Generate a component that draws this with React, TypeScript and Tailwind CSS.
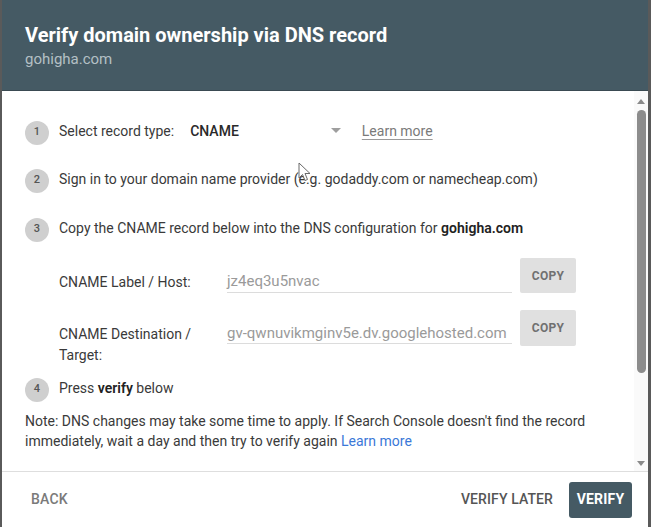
import React from "react";

function Step({ n, children, className = "" }: { n: number; children: React.ReactNode; className?: string }) {
  return (
    <div className={`flex items-center h-[24px] ${className}`}>
      <div className="w-[24px] h-[24px] rounded-full bg-[#cfcfcf] flex items-center justify-center text-[11px] text-[#555] font-medium mt-[3px] shrink-0">
        {n}
      </div>
      <div className="ml-[10px] text-[14px] leading-[20px] text-[#3a3a3a] whitespace-nowrap -mt-[1px]">{children}</div>
    </div>
  );
}

export default function App() {
  return (
    <div
      className="relative w-[651px] h-[527px] flex flex-col bg-white border-l-2 border-r-[3px] border-[#5a5a5a] overflow-hidden"
      style={{ fontFamily: "Roboto, 'Liberation Sans', sans-serif" }}
    >
      {/* Header */}
      <div className="h-[91px] bg-[#455a64] pl-[23px] pt-[22px] border-b border-[#3a4a52] shrink-0">
        <div className="text-[20px] leading-[26px] font-bold text-white">Verify domain ownership via DNS record</div>
        <div className="text-[15px] leading-[20px] text-[#b4c0c5] mt-[1px]">gohigha.com</div>
      </div>

      {/* Body */}
      <div className="flex flex-1 min-h-0">
        <div className="flex-1 pl-[23px] pt-[28px]">
          <Step n={1}>
            <span className="flex items-center">
              <span>Select record type:</span>
              <span className="ml-[16px] font-medium text-[#2a2a2a]">CNAME</span>
              <svg width="10" height="6" viewBox="0 0 10 6" className="ml-[92px]">
                <path d="M0 0 L10 0 L5 5 Z" fill="#9e9e9e" />
              </svg>
              <span className="ml-[21px] text-[#7a7a7a] underline underline-offset-[3px] decoration-[#9a9a9a]">Learn more</span>
            </span>
          </Step>
          <Step n={2} className="mt-[24px]">
            Sign in to your domain name provider (e.g. godaddy.com or namecheap.com)
          </Step>
          <Step n={3} className="mt-[25px]">
            Copy the CNAME record below into the DNS configuration for <span className="font-semibold text-[#222]">gohigha.com</span>
          </Step>

          {/* Fields */}
          <div className="pl-[34px] mt-[18px]">
            <div className="flex items-start h-[35px]">
              <div className="w-[168px] pt-[14px] text-[14px] leading-[20px] text-[#3a3a3a]">CNAME Label / Host:</div>
              <div className="w-[285px] mt-[13px] h-[22px] border-b border-[#dcdcdc] text-[15px] leading-[21px] text-[#9a9a9a]">
                jz4eq3u5nvac
              </div>
              <button className="ml-[8px] w-[56px] h-[35px] bg-[#e0e0e0] rounded-[2px] text-[12px] font-bold text-[#707070] tracking-[0.3px]">
                COPY
              </button>
            </div>
            <div className="flex items-start mt-[17px]">
              <div className="w-[168px] pt-[14px] text-[14px] leading-[21px] text-[#3a3a3a]">
                CNAME Destination /<br />Target:
              </div>
              <div className="w-[285px] mt-[13px] h-[21px] border-b border-[#dcdcdc] text-[15px] leading-[21px] text-[#9a9a9a] whitespace-nowrap">
                gv-qwnuvikmginv5e.dv.googlehosted.com
              </div>
              <button className="ml-[8px] w-[56px] h-[36px] bg-[#e0e0e0] rounded-[2px] text-[12px] font-bold text-[#707070] tracking-[0.3px]">
                COPY
              </button>
            </div>
          </div>

          <Step n={4} className="mt-[10px]">
            Press <span className="font-semibold text-[#222]">verify</span> below
          </Step>

          <div className="mt-[11px] text-[14px] leading-[20px] text-[#3a3a3a] whitespace-nowrap">
            Note: DNS changes may take some time to apply. If Search Console doesn't find the record
            <br />
            immediately, wait a day and then try to verify again <span className="text-[#3b78d8]">Learn more</span>
          </div>
        </div>

        {/* Scrollbar */}
        <div className="w-[14px] bg-[#fafafa] flex flex-col items-center relative">
          <svg width="8" height="5" viewBox="0 0 8 5" className="mt-[8px]">
            <path d="M0 5 L8 5 L4 0 Z" fill="#8a8a8a" />
          </svg>
          <div className="mt-[6px] w-[9px] h-[263px] rounded-full bg-[#8c8c8c]" />
          <div className="flex-1" />
          <svg width="8" height="5" viewBox="0 0 8 5" className="mb-[5px]">
            <path d="M0 0 L8 0 L4 5 Z" fill="#8a8a8a" />
          </svg>
        </div>
      </div>

      {/* Footer */}
      <div className="h-[56px] border-t border-[#dedede] flex items-center shrink-0">
        <span className="ml-[29px] text-[14px] font-medium text-[#7a7a7a] tracking-[0.2px]">BACK</span>
        <div className="flex-1" />
        <span className="text-[14px] font-medium text-[#555] tracking-[0.1px]">VERIFY LATER</span>
        <button className="ml-[16px] mr-[16px] w-[63px] h-[36px] rounded-[3px] bg-[#455a64] text-white text-[14px] font-bold tracking-[0.2px]">
          VERIFY
        </button>
      </div>

      {/* Mouse cursor */}
      <svg width="13" height="20" viewBox="0 0 13 20" className="absolute left-[296px] top-[162px]">
        <path d="M1 1 L1 16 L4.5 12.5 L7 18.5 L9.5 17.5 L7 11.5 L12 11.5 Z" fill="white" stroke="#6a6a6a" strokeWidth="1" strokeLinejoin="round" />
      </svg>
    </div>
  );
}
